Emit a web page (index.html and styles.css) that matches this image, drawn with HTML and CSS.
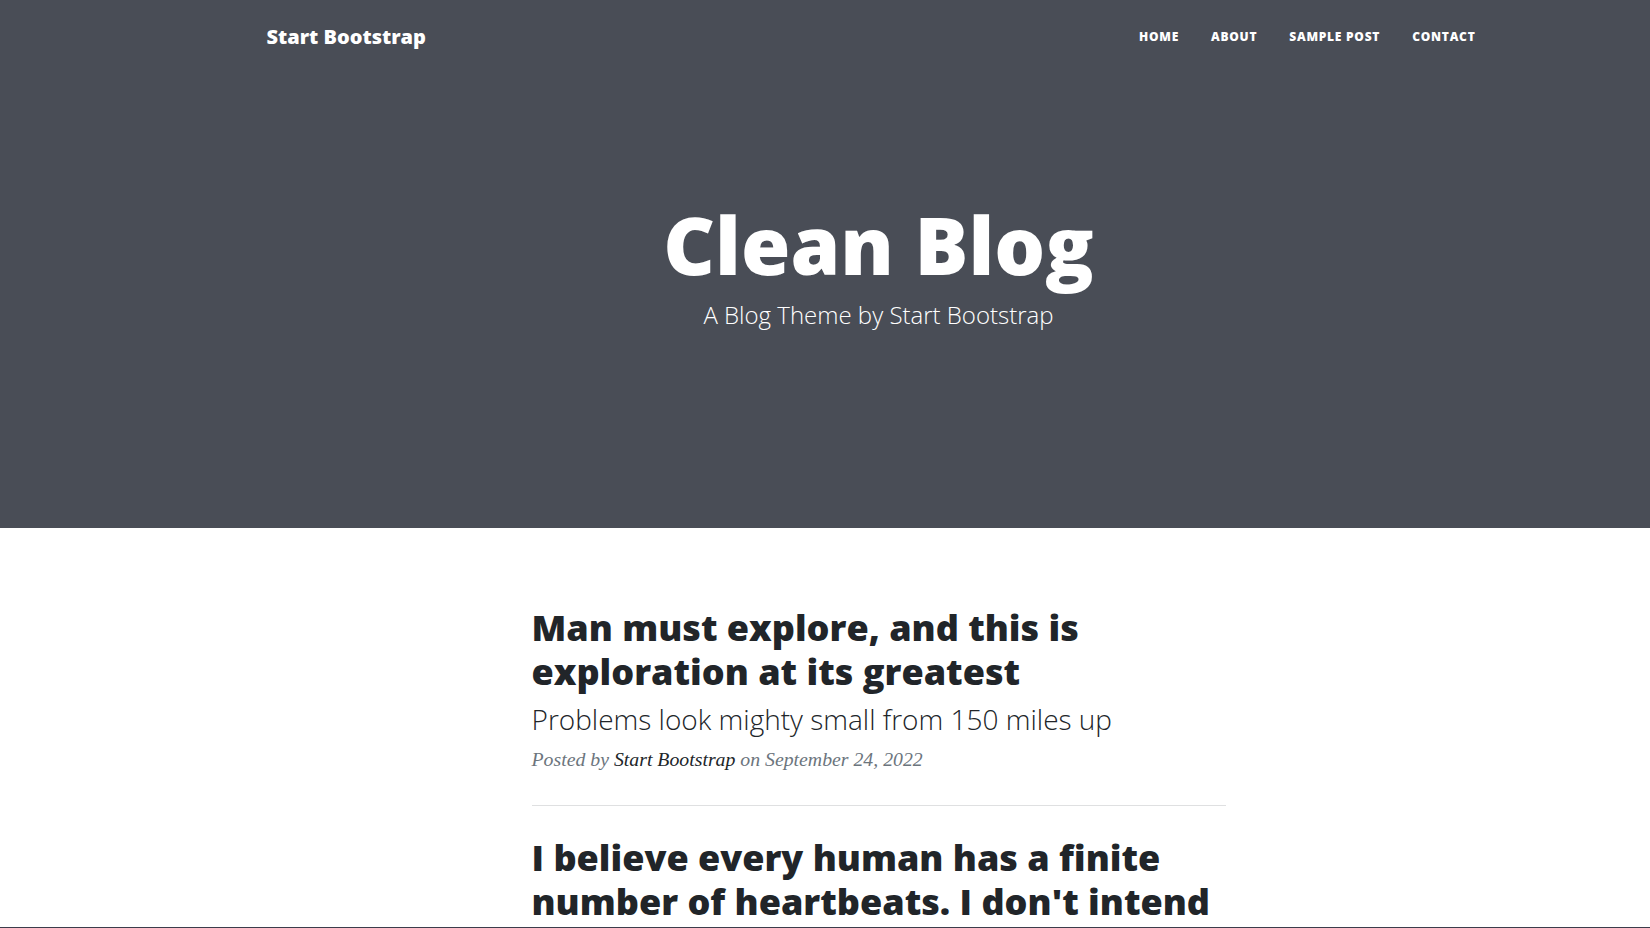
FILE: index.html
```html
<!DOCTYPE html>
<html lang="en">
<head>
<meta charset="utf-8">
<title>Clean Blog - Start Bootstrap Theme</title>
<link rel="stylesheet" href="styles.css">
</head>
<body>
<div class="page">
  <header class="masthead">
    <nav class="navbar">
      <div class="container nav-inner">
        <a class="brand" href="#">Start Bootstrap</a>
        <ul class="nav-links">
          <li><a href="#">Home</a></li>
          <li><a href="#">About</a></li>
          <li><a href="#">Sample Post</a></li>
          <li><a href="#">Contact</a></li>
        </ul>
      </div>
    </nav>
    <div class="container">
      <div class="site-heading">
        <h1>Clean Blog</h1>
        <span class="subheading">A Blog Theme by Start Bootstrap</span>
      </div>
    </div>
  </header>
  <main class="container">
    <div class="column">
      <div class="post-preview">
        <a href="#" class="post-link">
          <h2 class="post-title">Man must explore, and this is exploration at its greatest</h2>
          <h3 class="post-subtitle">Problems look mighty small from 150 miles up</h3>
        </a>
        <p class="post-meta">Posted by <a href="#">Start Bootstrap</a> on September 24, 2022</p>
      </div>
      <hr class="divider">
      <div class="post-preview">
        <a href="#" class="post-link">
          <h2 class="post-title">I believe every human has a finite number of heartbeats. I don't intend to waste any of mine.</h2>
        </a>
        <p class="post-meta">Posted by <a href="#">Start Bootstrap</a> on September 18, 2022</p>
      </div>
    </div>
  </main>
</div>
<div class="bottom-edge"></div>
</body>
</html>
```
FILE: styles.css
```css
html, body {
  margin: 0;
  padding: 0;
}
body {
  overflow: hidden;
  background: #fff;
  color: #212529;
  font-family: "Liberation Serif", serif;
  font-size: 20px;
}
.page {
  width: 1757px;
}
.container {
  box-sizing: border-box;
  max-width: 1320px;
  margin: 0 auto;
  padding: 0 48px;
}
a {
  text-decoration: none;
  color: inherit;
}

/* masthead */
.masthead {
  position: relative;
  background: #494d56;
  margin-bottom: 48px;
}
.navbar {
  position: absolute;
  top: 0;
  left: 0;
  right: 0;
  padding-top: 22px;
}
.nav-inner {
  display: flex;
  align-items: center;
  justify-content: space-between;
}
.brand {
  font-family: "Open Sans", sans-serif;
  font-weight: 800;
  font-size: 20px;
  line-height: 30px;
  color: #fff;
}
.nav-links {
  display: flex;
  list-style: none;
  margin: 0;
  padding: 0;
}
.nav-links a {
  display: block;
  padding: 0 16px;
  font-family: "Open Sans", sans-serif;
  font-weight: 800;
  font-size: 12px;
  line-height: 18px;
  letter-spacing: 0.0625em;
  text-transform: uppercase;
  color: #fff;
}
.nav-links li:last-child a {
  padding-right: 15px;
}
.site-heading {
  padding: 196px 0 200px;
  text-align: center;
  color: #fff;
}
.site-heading h1 {
  margin: 0;
  font-family: "Open Sans", sans-serif;
  font-weight: 800;
  font-size: 80px;
  line-height: 96px;
}
.subheading {
  display: block;
  margin-top: 10px;
  font-family: "Open Sans", sans-serif;
  font-weight: 300;
  font-size: 24px;
  line-height: 26.4px;
}

/* posts */
.column {
  display: flow-root;
  width: 694px;
  margin: 0 auto;
}
.post-title {
  margin: 30px 0 10px;
  font-family: "Open Sans", sans-serif;
  font-weight: 800;
  font-size: 36px;
  line-height: 43.2px;
  color: #212529;
}
.post-subtitle {
  margin: 0 0 10px;
  font-family: "Open Sans", sans-serif;
  font-weight: 300;
  font-size: 28px;
  line-height: 33.6px;
  color: #212529;
}
.post-meta {
  margin: 0 0 32px;
  font-style: italic;
  font-size: 19.8px;
  line-height: 27px;
  color: #6c757d;
}
.post-meta a {
  color: #212529;
}
.divider {
  margin: 0;
  border: 0;
  border-top: 1px solid #dfe0e1;
}
.bottom-edge {
  position: fixed;
  left: 0;
  right: 0;
  bottom: 0;
  height: 1px;
  background: #3d3d4b;
}
```
